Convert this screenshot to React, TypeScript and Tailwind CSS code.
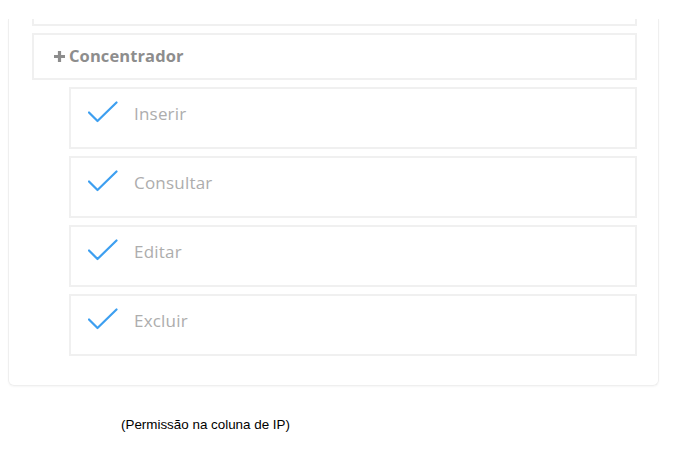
const items = ["Inserir", "Consultar", "Editar", "Excluir"];

function Check() {
  return (
    <svg width="30" height="22" viewBox="0 0 30 22" fill="none" className="shrink-0 mb-[12px]">
      <path d="M1 11.5 L9.5 20 L28.5 1.5" stroke="#3d9ff0" strokeWidth="2.2" strokeLinecap="round" strokeLinejoin="round" />
    </svg>
  );
}

function Plus() {
  return (
    <svg width="13" height="13" viewBox="0 0 13 13" className="shrink-0">
      <path d="M6.5 1 V12 M1 6.5 H12" stroke="#8d8d8d" strokeWidth="3.2" />
    </svg>
  );
}

export default function App() {
  return (
    <div className="w-[674px] h-[450px] bg-white pt-[19px] font-['Open_Sans',sans-serif]">
      <div className="ml-[8px] w-[651px] h-[367px] border-x border-b border-[#efefef] rounded-b-[6px] shadow-[0_1px_2px_rgba(0,0,0,0.04)] pl-[23px] pr-[21px]">
        <div className="h-[7px] border-x-2 border-b-2 border-[#f0f0f0]" />
        <div className="mt-[7px] h-[47px] border-2 border-[#f0f0f0] flex items-center pl-[19px] gap-[3px] text-[#8d8d8d] font-bold text-[16.5px]">
          <Plus />
          <span className="-mt-[1px] tracking-[0.1px]">Concentrador</span>
        </div>
        <div className="ml-[37px] mt-[7px] flex flex-col gap-[7px]">
          {items.map((label) => (
            <div key={label} className="h-[62px] border-2 border-[#f0f0f0] flex items-center pl-[17px] gap-[16px]">
              <Check />
              <span className="text-[17px] text-[#adadad] mb-[8px] tracking-[0.2px]">{label}</span>
            </div>
          ))}
        </div>
      </div>
      <p className="mt-[29px] pl-[121px] text-[13.4px] text-black font-['Liberation_Sans',Arial,sans-serif]">
        (Permissão na coluna de IP)
      </p>
    </div>
  );
}
